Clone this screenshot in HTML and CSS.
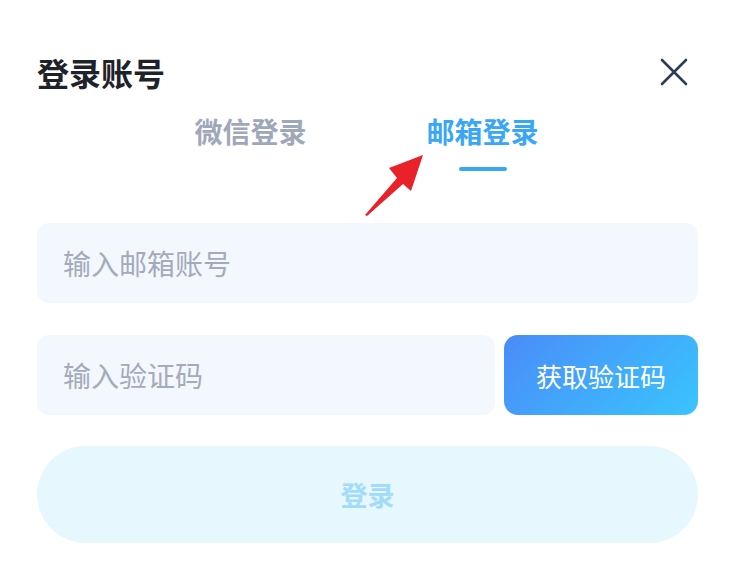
FILE: index.html
```html
<!DOCTYPE html>
<html lang="zh-CN">
<head>
<meta charset="utf-8">
<link rel="stylesheet" href="styles.css">
</head>
<body>
<div class="dialog">
  <div class="header">
    <h1 class="title">登录账号</h1>
    <button class="close" aria-label="关闭">
      <svg width="28" height="28" viewBox="0 0 28 28"><path d="M2 2 L26 26 M26 2 L2 26" stroke="#2b3d5c" stroke-width="2.6" stroke-linecap="round" fill="none"/></svg>
    </button>
  </div>
  <div class="tabs">
    <div class="tab">微信登录<span class="bar"></span></div>
    <div class="tab active">邮箱登录<span class="bar"></span></div>
  </div>
  <div class="form">
    <div class="field"><input class="input" placeholder="输入邮箱账号"></div>
    <div class="code-row">
      <div class="field grow"><input class="input" placeholder="输入验证码"></div>
      <button class="code-btn">获取验证码</button>
    </div>
    <button class="submit">登录</button>
  </div>
  <svg class="arrow" width="70" height="70" viewBox="0 0 70 70"><path d="M5 65 L37 28 L29 18 L63 5 L51 41 L43 34 L7 66 Z" fill="#e9222a"/></svg>
</div>
</body>
</html>
```
FILE: styles.css
```css
* { box-sizing: border-box; }
html, body { margin: 0; padding: 0; background: #fff; }
body { font-family: "Noto Sans CJK SC", "Noto Sans", sans-serif; }
.dialog { position: relative; width: 735px; height: 584px; padding: 0 37px; }
.header { display: flex; align-items: center; justify-content: space-between; padding-top: 52px; height: 92px; }
.title { margin: 0; font-size: 32px; line-height: 40px; font-weight: 700; color: #1e2229; }
.close { border: 0; background: none; padding: 0; width: 28px; height: 28px; margin-right: 10px; display: flex; }
.tabs { display: flex; justify-content: center; gap: 120px; margin-top: 21px; padding-right: 2px; }
.tab { display: flex; flex-direction: column; align-items: center; font-size: 28px; line-height: 36px; font-weight: 700; color: #9fa8ba; }
.tab .bar { width: 48px; height: 4px; border-radius: 2px; margin-top: 18px; background: transparent; }
.tab.active { color: #3aa7f6; }
.tab.active .bar { background: #3aa7f6; }
.form { display: flex; flex-direction: column; gap: 32px; margin-top: 52px; }
.field { display: flex; }
.grow { flex: 1; }
.input { width: 100%; height: 80px; border: 0; outline: none; border-radius: 12px; background: #f3f7fe; padding: 0 26px; font-family: inherit; font-size: 28px; color: #333; }
.input::placeholder { color: #a3abbb; }
.code-row { display: flex; gap: 9px; }
.code-btn { width: 194px; height: 80px; border: 0; border-radius: 14px; background: linear-gradient(135deg, #4a8cf8 0%, #3ac4fe 100%); color: #fff; font-family: inherit; font-size: 26px; padding: 0; }
.submit { height: 97px; border: 0; border-radius: 49px; background: #e6f7fe; color: #a2dcfa; font-family: inherit; font-size: 27px; font-weight: 700; padding: 0; margin-top: -1px; }
.arrow { position: absolute; left: 360px; top: 150px; }
```
